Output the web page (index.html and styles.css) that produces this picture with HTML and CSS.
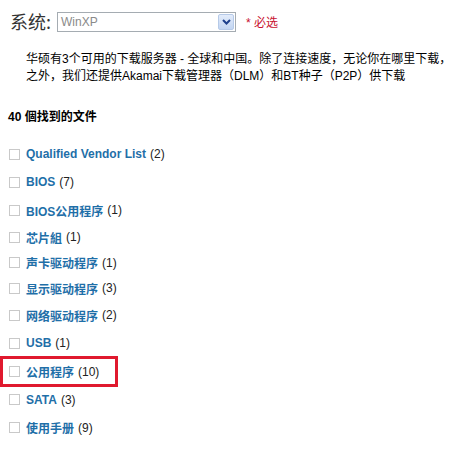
FILE: index.html
```html
<!DOCTYPE html>
<html lang="zh-CN">
<head>
    <meta charset="UTF-8">
    <title>下载</title>
    <link rel="stylesheet" href="styles.css">
</head>
<body>
    <div class="page">
        <div class="os-row">
            <span class="os-label">系统:</span>
            <div class="select">
                <span class="select-value">WinXP</span>
                <span class="select-btn">
                    <svg width="9" height="6" viewBox="0 0 9 6"><path d="M1 1 L4.5 4.5 L8 1" fill="none" stroke="#1c3f8c" stroke-width="2"/></svg>
                </span>
            </div>
            <span class="required">* 必选</span>
        </div>

        <p class="intro">华硕有3个可用的下载服务器 - 全球和中国。除了连接速度，无论你在哪里下载，<br>之外，我们还提供Akamai下载管理器（DLM）和BT种子（P2P）供下载</p>

        <h3 class="found">40 個找到的文件</h3>

        <ul class="files">
            <li><span class="box"></span><a href="#">Qualified Vendor List</a> <span class="count">(2)</span></li>
            <li><span class="box"></span><a href="#">BIOS</a> <span class="count">(7)</span></li>
            <li><span class="box"></span><a href="#">BIOS公用程序</a> <span class="count">(1)</span></li>
            <li class="tight"><span class="box"></span><a href="#">芯片組</a> <span class="count">(1)</span></li>
            <li class="tight"><span class="box"></span><a href="#">声卡驱动程序</a> <span class="count">(1)</span></li>
            <li class="tight"><span class="box"></span><a href="#">显示驱动程序</a> <span class="count">(3)</span></li>
            <li><span class="box"></span><a href="#">网络驱动程序</a> <span class="count">(2)</span></li>
            <li><span class="box"></span><a href="#">USB</a> <span class="count">(1)</span></li>
            <li class="marked"><span class="box"></span><a href="#">公用程序</a> <span class="count">(10)</span></li>
            <li><span class="box"></span><a href="#">SATA</a> <span class="count">(3)</span></li>
            <li><span class="box"></span><a href="#">使用手册</a> <span class="count">(9)</span></li>
        </ul>
    </div>
</body>
</html>
```

FILE: styles.css
```css
* {
    margin: 0;
    padding: 0;
    box-sizing: border-box;
}

body {
    background: #fff;
    font-family: 'Liberation Sans', 'Noto Sans CJK SC', sans-serif;
    font-size: 12px;
    color: #000;
}

.page {
    padding: 11px 0 0 0;
}

.os-row {
    display: flex;
    align-items: center;
    height: 21px;
    padding-left: 10px;
}

.os-label {
    font-family: 'Noto Sans CJK SC', sans-serif;
    font-size: 18px;
    color: #333;
    width: 47px;
    line-height: 21px;
}

.select {
    display: flex;
    align-items: center;
    justify-content: space-between;
    width: 179px;
    height: 20px;
    border: 1px solid #a5acb2;
    background: #fff;
    padding: 1px 1px 1px 3px;
}

.select-value {
    color: #8a8a8a;
    font-size: 12px;
}

.select-btn {
    display: flex;
    align-items: center;
    justify-content: center;
    width: 16px;
    height: 16px;
    border: 1px solid #b6cae8;
    border-radius: 2px;
    background: linear-gradient(#e3ecfb, #c2d5f2);
}

.required {
    margin-left: 10px;
    color: #c8102e;
    font-size: 12px;
}

.intro {
    margin: 19px 0 0 26px;
    line-height: 17px;
    white-space: nowrap;
    font-size: 12px;
}

.found {
    margin: 24px 0 0 8px;
    font-size: 12px;
    font-weight: bold;
    line-height: 16px;
}

.files {
    list-style: none;
    margin-top: 15px;
}

.files li {
    display: flex;
    align-items: center;
    gap: 4px;
    height: 28.2px;
    padding-left: 9px;
    white-space: nowrap;
}

.files li.tight {
    height: 25.5px;
}

.box {
    width: 11px;
    height: 11px;
    border: 1px solid #c9c9c9;
    background: #fff;
    margin-right: 2px;
}

.files a {
    color: #1f6fa8;
    font-weight: bold;
    text-decoration: none;
}

.count {
    color: #222;
}

.files li.marked {
    border: 3px solid #e0192e;
    width: 118px;
    height: 31px;
    margin: -1px 0 -2px;
    padding-left: 6px;
}
```
